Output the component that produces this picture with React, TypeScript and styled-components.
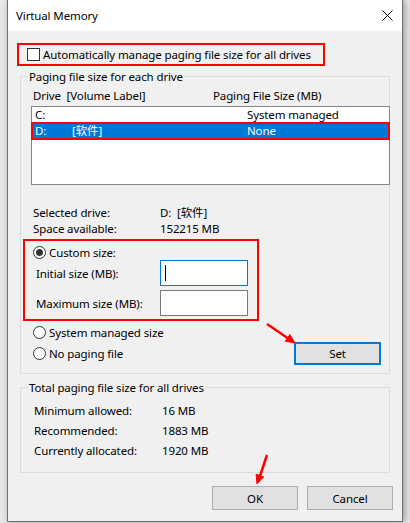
import React from "react";
import styled, { createGlobalStyle } from "styled-components";

const GlobalStyle = createGlobalStyle`
  html, body {
    margin: 0;
    padding: 0;
  }
  body {
    background: #e8e8e8;
    font-family: "Noto Sans", "Noto Sans CJK SC", sans-serif;
    font-size: 11.5px;
    letter-spacing: -0.12px;
    color: #000;
    overflow: hidden;
    white-space: nowrap;
  }
`;

const Page = styled.div`
  position: relative;
  width: 410px;
  height: 523px;
  overflow: hidden;
`;

const Window = styled.div`
  margin-left: 7px;
  width: 396px;
  height: 522px;
  box-sizing: border-box;
  border: 1px solid #6e6e6e;
  border-top: none;
  background: #f0f0f0;
  display: flex;
  flex-direction: column;
  box-shadow: 2px 0 7px rgba(0, 0, 0, 0.35);
`;

const TitleBar = styled.div`
  height: 31px;
  flex: none;
  background: #fff;
  display: flex;
  align-items: center;
  justify-content: space-between;
  padding: 0 9px 0 8px;
`;

const AnnotBox = styled.div<{ w: number }>`
  box-sizing: border-box;
  border: 2px solid #f00;
  width: ${(p) => p.w}px;
`;

const AutoBox = styled(AnnotBox)`
  margin: 12px 0 0 9px;
  height: 23px;
  display: flex;
  align-items: center;
  gap: 3px;
  padding-left: 8px;
`;

const Checkbox = styled.span`
  width: 13px;
  height: 13px;
  box-sizing: border-box;
  border: 1px solid #333;
  background: #fff;
  flex: none;
`;

const Group = styled.fieldset<{ top: number; bottom: number }>`
  margin: ${(p) => p.top}px 12px 0;
  padding: 0 0 ${(p) => p.bottom}px 0;
  border: 1px solid #dcdcdc;
  min-width: 0;

  legend {
    margin-left: 7px;
    padding: 0 1px;
    line-height: 15px;
  }
`;

const ListHeader = styled.div`
  margin: 4px 0 0 12px;
  display: grid;
  grid-template-columns: 180px auto;
  line-height: 15px;
  white-space: pre;
`;

const ListBox = styled.div`
  margin: 3px 0 0 10px;
  width: 359px;
  height: 79px;
  box-sizing: border-box;
  border: 1px solid #828790;
  background: #fff;
`;

const DriveRow = styled.div<{ selected?: boolean }>`
  display: grid;
  grid-template-columns: 37px 175px 1fr;
  white-space: pre;
  height: ${(p) => (p.selected ? 18 : 15)}px;
  line-height: ${(p) => (p.selected ? 14 : 15)}px;
  box-sizing: border-box;
  padding-left: ${(p) => (p.selected ? 2 : 3)}px;
  margin: ${(p) => (p.selected ? "0 -1px" : "0")};
  background: ${(p) => (p.selected ? "#0078d7" : "transparent")};
  color: ${(p) => (p.selected ? "#fff" : "#000")};
  border: ${(p) => (p.selected ? "2px solid #f00" : "none")};
`;

const InfoGrid = styled.div<{ top: number; left: number; col: number; row: number }>`
  margin: ${(p) => p.top}px 0 0 ${(p) => p.left}px;
  display: grid;
  grid-template-columns: ${(p) => p.col}px auto;
  grid-auto-rows: ${(p) => p.row}px;
  align-items: center;
  white-space: pre;
`;

const CustomBox = styled(AnnotBox)`
  margin: 3px 0 0 2px;
  padding: 4px 0 3px 8px;
`;

const RadioRow = styled.div<{ h: number; top?: number; left?: number }>`
  display: flex;
  align-items: center;
  gap: 3px;
  height: ${(p) => p.h}px;
  margin-top: ${(p) => p.top ?? 0}px;
  margin-left: ${(p) => p.left ?? 0}px;
`;

const Radio = styled.span<{ checked?: boolean }>`
  width: 13px;
  height: 13px;
  box-sizing: border-box;
  border: 1px solid #333;
  border-radius: 50%;
  background: #fff;
  flex: none;
  display: flex;
  align-items: center;
  justify-content: center;

  &::after {
    content: "";
    display: ${(p) => (p.checked ? "block" : "none")};
    width: 7px;
    height: 7px;
    border-radius: 50%;
    background: #333;
  }
`;

const SizeRow = styled.div<{ top: number }>`
  display: flex;
  align-items: center;
  height: 26px;
  margin-top: ${(p) => p.top}px;
  padding-left: 3px;

  label {
    width: 124px;
  }
`;

const TextInput = styled.div<{ focused?: boolean }>`
  width: 88px;
  height: 26px;
  box-sizing: border-box;
  border: 1px solid ${(p) => (p.focused ? "#0078d7" : "#7a7a7a")};
  background: #fff;
  display: flex;
  align-items: center;
  padding-left: 4px;
`;

const Caret = styled.span`
  width: 1px;
  height: 16px;
  background: #000;
`;

const BottomRow = styled.div`
  display: flex;
  align-items: center;
  justify-content: space-between;
  height: 23px;
  margin: 2px 8px 0 12px;
`;

const Button = styled.div<{ primary?: boolean; w: number; h: number }>`
  width: ${(p) => p.w}px;
  height: ${(p) => p.h}px;
  box-sizing: border-box;
  border: ${(p) => (p.primary ? "2px solid #0078d7" : "1px solid #adadad")};
  background: #e1e1e1;
  display: flex;
  align-items: center;
  justify-content: center;
`;

const ButtonRow = styled.div`
  display: flex;
  justify-content: flex-end;
  gap: 9px;
  margin-top: 13px;
  padding-right: 9px;
`;

const Overlay = styled.svg`
  position: absolute;
  left: 0;
  top: 0;
  pointer-events: none;
`;

const CloseIcon = () => (
  <svg width="11" height="11" viewBox="0 0 11 11">
    <path d="M0.5 0.5 L10.5 10.5 M10.5 0.5 L0.5 10.5" stroke="#000" strokeWidth="1" />
  </svg>
);

export default function App() {
  return (
    <Page>
      <GlobalStyle />
      <Window>
        <TitleBar>
          <span>Virtual Memory</span>
          <CloseIcon />
        </TitleBar>

        <AutoBox w={308}>
          <Checkbox />
          <span>Automatically manage paging file size for all drives</span>
        </AutoBox>

        <Group top={3} bottom={8}>
          <legend>Paging file size for each drive</legend>
          <ListHeader>
            <span>{"Drive  [Volume Label]"}</span>
            <span>Paging File Size (MB)</span>
          </ListHeader>
          <ListBox>
            <DriveRow>
              <span>C:</span>
              <span></span>
              <span>System managed</span>
            </DriveRow>
            <DriveRow selected>
              <span>D:</span>
              <span>[软件]</span>
              <span>None</span>
            </DriveRow>
          </ListBox>

          <InfoGrid top={19} left={12} col={127} row={16}>
            <span>Selected drive:</span>
            <span>{"D:  [软件]"}</span>
            <span>Space available:</span>
            <span>152215 MB</span>
          </InfoGrid>

          <CustomBox w={236}>
            <RadioRow h={14}>
              <Radio checked />
              <span>Custom size:</span>
            </RadioRow>
            <SizeRow top={1}>
              <label>Initial size (MB):</label>
              <TextInput focused>
                <Caret />
              </TextInput>
            </SizeRow>
            <SizeRow top={4}>
              <label>Maximum size (MB):</label>
              <TextInput />
            </SizeRow>
          </CustomBox>

          <RadioRow h={16} top={3} left={12}>
            <Radio />
            <span>System managed size</span>
          </RadioRow>
          <BottomRow>
            <RadioRow h={16}>
              <Radio />
              <span>No paging file</span>
            </RadioRow>
            <Button primary w={87} h={23}>
              Set
            </Button>
          </BottomRow>
        </Group>

        <Group top={6} bottom={12}>
          <legend>Total paging file size for all drives</legend>
          <InfoGrid top={5} left={13} col={128} row={20}>
            <span>Minimum allowed:</span>
            <span>16 MB</span>
            <span>Recommended:</span>
            <span>1883 MB</span>
            <span>Currently allocated:</span>
            <span>1920 MB</span>
          </InfoGrid>
        </Group>

        <ButtonRow>
          <Button w={86} h={24}>OK</Button>
          <Button w={86} h={24}>Cancel</Button>
        </ButtonRow>
      </Window>

      <Overlay width="410" height="523" viewBox="0 0 410 523">
        <g fill="#f00" stroke="#f00">
          <line x1="267" y1="324" x2="289" y2="339" strokeWidth="2.5" />
          <polygon points="295,343 285.3,341.2 289.9,334.6" strokeWidth="1" />
          <line x1="267" y1="455" x2="260" y2="476" strokeWidth="2.5" />
          <polygon points="257,484 263.7,476.8 256.1,474.2" strokeWidth="1" />
        </g>
      </Overlay>
    </Page>
  );
}
